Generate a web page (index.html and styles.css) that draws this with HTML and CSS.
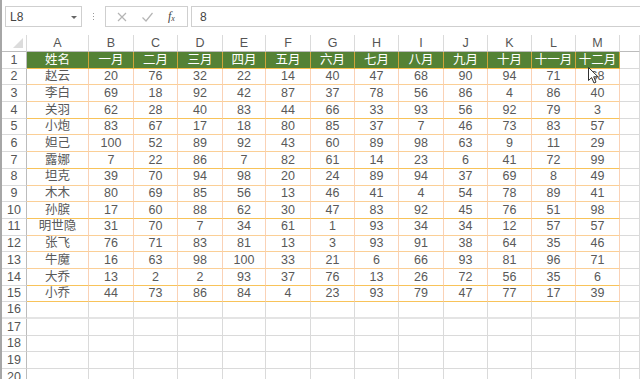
FILE: index.html
```html
<!DOCTYPE html>
<html lang="zh">
<head>
<meta charset="utf-8">
<title>Sheet</title>
<link rel="stylesheet" href="styles.css">
</head>
<body>
<div class="app">
  <div class="fbar">
    <div class="namebox"><span class="nb-text">L8</span><span class="nb-arrow"></span></div>
    <div class="vdots"><i></i><i></i><i></i></div>
    <div class="fxbox">
      <svg class="ic" width="12" height="12" viewBox="0 0 12 12"><path d="M2 2L10 10M10 2L2 10" stroke="#b4b4b4" stroke-width="1.2" fill="none"/></svg>
      <svg class="ic" width="13" height="12" viewBox="0 0 13 12"><path d="M1.5 6.5L5 10L11.5 2" stroke="#b4b4b4" stroke-width="1.2" fill="none"/></svg>
      <span class="fx">f<sub>x</sub></span>
    </div>
    <div class="finput">8</div>
  </div>

  <div class="sheet">
    <div class="row colhead">
      <div class="corner"><span class="tri"></span></div>
      <div>A</div><div>B</div><div>C</div><div>D</div><div>E</div><div>F</div><div>G</div><div>H</div><div>I</div><div>J</div><div>K</div><div>L</div><div>M</div><div></div>
    </div>
    <div class="row head">
      <div class="rh">1</div>
      <div>姓名</div><div>一月</div><div>二月</div><div>三月</div><div>四月</div><div>五月</div><div>六月</div><div>七月</div><div>八月</div><div>九月</div><div>十月</div><div>十一月</div><div>十二月</div><div class="blank"></div>
    </div>
    <div class="row data"><div class="rh">2</div><div>赵云</div><div>20</div><div>76</div><div>32</div><div>22</div><div>14</div><div>40</div><div>47</div><div>68</div><div>90</div><div>94</div><div>71</div><div>68</div><div class="blank"></div></div>
    <div class="row data"><div class="rh">3</div><div>李白</div><div>69</div><div>18</div><div>92</div><div>42</div><div>87</div><div>37</div><div>78</div><div>56</div><div>86</div><div>4</div><div>86</div><div>40</div><div class="blank"></div></div>
    <div class="row data"><div class="rh">4</div><div>关羽</div><div>62</div><div>28</div><div>40</div><div>83</div><div>44</div><div>66</div><div>33</div><div>93</div><div>56</div><div>92</div><div>79</div><div>3</div><div class="blank"></div></div>
    <div class="row data"><div class="rh">5</div><div>小炮</div><div>83</div><div>67</div><div>17</div><div>18</div><div>80</div><div>85</div><div>37</div><div>7</div><div>46</div><div>73</div><div>83</div><div>57</div><div class="blank"></div></div>
    <div class="row data"><div class="rh">6</div><div>妲己</div><div>100</div><div>52</div><div>89</div><div>92</div><div>43</div><div>60</div><div>89</div><div>98</div><div>63</div><div>9</div><div>11</div><div>29</div><div class="blank"></div></div>
    <div class="row data"><div class="rh">7</div><div>露娜</div><div>7</div><div>22</div><div>86</div><div>7</div><div>82</div><div>61</div><div>14</div><div>23</div><div>6</div><div>41</div><div>72</div><div>99</div><div class="blank"></div></div>
    <div class="row data"><div class="rh">8</div><div>坦克</div><div>39</div><div>70</div><div>94</div><div>98</div><div>20</div><div>24</div><div>89</div><div>94</div><div>37</div><div>69</div><div>8</div><div>49</div><div class="blank"></div></div>
    <div class="row data"><div class="rh">9</div><div>木木</div><div>80</div><div>69</div><div>85</div><div>56</div><div>13</div><div>46</div><div>41</div><div>4</div><div>54</div><div>78</div><div>89</div><div>41</div><div class="blank"></div></div>
    <div class="row data"><div class="rh">10</div><div>孙膑</div><div>17</div><div>60</div><div>88</div><div>62</div><div>30</div><div>47</div><div>83</div><div>92</div><div>45</div><div>76</div><div>51</div><div>98</div><div class="blank"></div></div>
    <div class="row data"><div class="rh">11</div><div>明世隐</div><div>31</div><div>70</div><div>7</div><div>34</div><div>61</div><div>1</div><div>93</div><div>34</div><div>34</div><div>12</div><div>57</div><div>57</div><div class="blank"></div></div>
    <div class="row data"><div class="rh">12</div><div>张飞</div><div>76</div><div>71</div><div>83</div><div>81</div><div>13</div><div>3</div><div>93</div><div>91</div><div>38</div><div>64</div><div>35</div><div>46</div><div class="blank"></div></div>
    <div class="row data"><div class="rh">13</div><div>牛魔</div><div>16</div><div>63</div><div>98</div><div>100</div><div>33</div><div>21</div><div>6</div><div>66</div><div>93</div><div>81</div><div>96</div><div>71</div><div class="blank"></div></div>
    <div class="row data"><div class="rh">14</div><div>大乔</div><div>13</div><div>2</div><div>2</div><div>93</div><div>37</div><div>76</div><div>13</div><div>26</div><div>72</div><div>56</div><div>35</div><div>6</div><div class="blank"></div></div>
    <div class="row data"><div class="rh">15</div><div>小乔</div><div>44</div><div>73</div><div>86</div><div>84</div><div>4</div><div>23</div><div>93</div><div>79</div><div>47</div><div>77</div><div>17</div><div>39</div><div class="blank"></div></div>
    <div class="row empty"><div class="rh">16</div><div></div><div></div><div></div><div></div><div></div><div></div><div></div><div></div><div></div><div></div><div></div><div></div><div></div><div></div></div>
    <div class="row empty"><div class="rh">17</div><div></div><div></div><div></div><div></div><div></div><div></div><div></div><div></div><div></div><div></div><div></div><div></div><div></div><div></div></div>
    <div class="row empty"><div class="rh">18</div><div></div><div></div><div></div><div></div><div></div><div></div><div></div><div></div><div></div><div></div><div></div><div></div><div></div><div></div></div>
    <div class="row empty"><div class="rh">19</div><div></div><div></div><div></div><div></div><div></div><div></div><div></div><div></div><div></div><div></div><div></div><div></div><div></div><div></div></div>
    <div class="row empty"><div class="rh">20</div><div></div><div></div><div></div><div></div><div></div><div></div><div></div><div></div><div></div><div></div><div></div><div></div><div></div><div></div></div>

    <svg class="cursor" width="12" height="17" viewBox="0 0 12 17"><path d="M0.5 0.5L0.5 13.5L3.6 10.6L6 16L8 15.1L5.7 9.8L10 9.8Z" fill="#fff" stroke="#333" stroke-width="1" stroke-linejoin="round"/></svg>
  </div>
</div>
</body>
</html>
```

FILE: styles.css
```css
html, body {
  margin: 0;
  padding: 0;
  background: #fff;
}
body {
  width: 640px;
  height: 379px;
  overflow: hidden;
  font-family: "Liberation Sans", "Noto Sans CJK SC", sans-serif;
}
.app {
  width: 638px;
  height: 379px;
  border-left: 2px solid #a6a6a6;
  overflow: hidden;
}
.fbar {
  display: flex;
  align-items: stretch;
  height: 21px;
  padding-top: 6px;
  padding-left: 3px;
  padding-bottom: 8px;
}
.namebox {
  width: 77px;
  box-sizing: border-box;
  border: 1px solid #cfcfcf;
  display: flex;
  align-items: center;
  justify-content: space-between;
  padding: 0 4px 0 4px;
}
.nb-text {
  font-size: 12px;
  color: #444;
}
.nb-arrow {
  width: 0;
  height: 0;
  border-left: 3px solid transparent;
  border-right: 3px solid transparent;
  border-top: 3px solid #666;
  margin-top: 1px;
}
.vdots {
  width: 23px;
  display: flex;
  flex-direction: column;
  align-items: center;
  justify-content: center;
  gap: 1.5px;
}
.vdots i {
  display: block;
  width: 1px;
  height: 1.5px;
  background: #9a9a9a;
}
.fxbox {
  width: 83px;
  box-sizing: border-box;
  border: 1px solid #cfcfcf;
  display: flex;
  align-items: center;
  padding-left: 10px;
  gap: 13px;
}
.fx {
  font-family: "Liberation Serif", serif;
  font-style: italic;
  font-size: 12px;
  color: #444;
  margin-left: 1px;
}
.fx sub {
  font-size: 8px;
  vertical-align: -1px;
}
.finput {
  flex: 1;
  margin-left: 3px;
  box-sizing: border-box;
  border-top: 1px solid #cfcfcf;
  border-bottom: 1px solid #cfcfcf;
  border-left: 1px solid #cfcfcf;
  font-size: 12px;
  color: #444;
  padding-left: 8px;
  display: flex;
  align-items: center;
}

.sheet {
  position: relative;
}
.row {
  display: grid;
  grid-template-columns: 25px 62px 45px 44px 45px 43px 45px 44px 44px 45px 44px 44px 44px 44px 20px;
  height: 16.7px;
}
.row > div {
  box-sizing: border-box;
  border-right: 1px solid #dadada;
  border-bottom: 1px solid #dadada;
  display: flex;
  align-items: center;
  justify-content: center;
  font-size: 12.5px;
  color: #595959;
  white-space: nowrap;
  line-height: 1;
}
.row > .rh {
  border-right-color: #bcbcbc;
  color: #555;
  font-size: 12.5px;
}
.colhead {
  height: 17px;
}
.colhead > div {
  font-size: 12.5px;
  color: #555;
  border-bottom-color: #bcbcbc;
  padding-top: 1px;
}
.corner {
  position: relative;
}
.tri {
  position: absolute;
  right: 3px;
  bottom: 3px;
  width: 0;
  height: 0;
  border-left: 10px solid transparent;
  border-bottom: 10px solid #dcdcdc;
}

.head > div:not(.rh):not(.blank) {
  background: #548235;
  color: #fff;
  border-right-color: #cfa43a;
  border-bottom-color: #f4bd4a;
}
.head > div:nth-child(14) {
  border-right-color: #f4bd4a;
}

.data > div:not(.rh):not(.blank) {
  border-bottom-color: #fbcf96;
  border-right-color: #fad2b6;
}
.data > div:nth-child(2),
.data > div:nth-child(5),
.data > div:nth-child(6),
.data > div:nth-child(10),
.data > div:nth-child(13),
.data > div:nth-child(14) {
  border-right-color: #f8c35a;
}
.data:nth-of-type(5) > div:not(.rh):not(.blank),
.data:nth-of-type(8) > div:not(.rh):not(.blank),
.data:nth-of-type(11) > div:not(.rh):not(.blank),
.data:nth-of-type(15) > div:not(.rh):not(.blank),
.data:nth-of-type(16) > div:not(.rh):not(.blank) {
  border-bottom-color: #f8c35a;
}
.empty:nth-of-type(17) > div {
  border-bottom: 2px solid #e4e4e4;
}

.cursor {
  position: absolute;
  left: 586px;
  top: 32px;
}
```
